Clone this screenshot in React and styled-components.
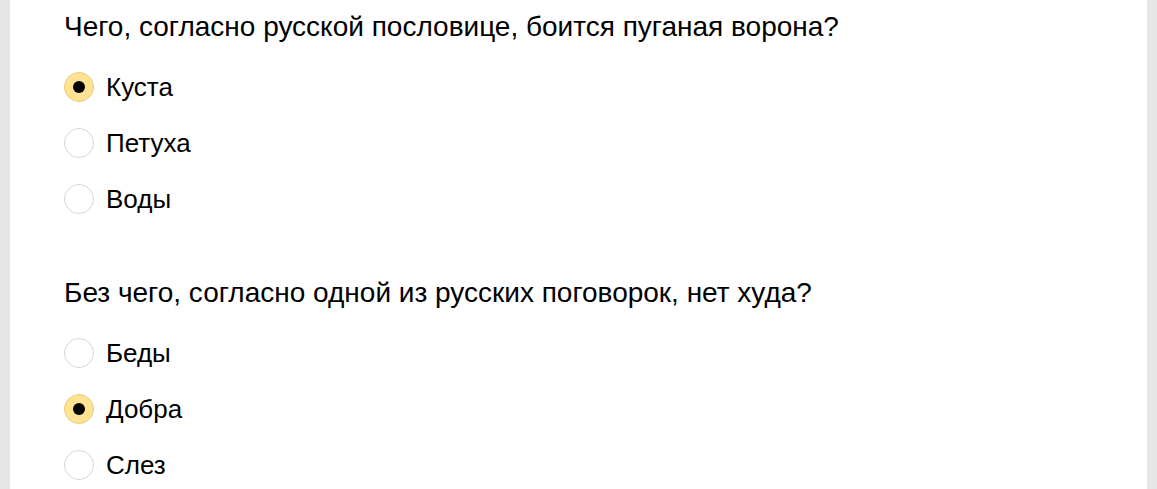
import React from "react";
import styled, { createGlobalStyle } from "styled-components";

const Global = createGlobalStyle`
  html, body { margin: 0; padding: 0; background: #e6e6e6; }
  body { font-family: "Liberation Sans", Arial, sans-serif; color: #000; }
`;

const Page = styled.div`
  display: flex;
  padding: 0 10px;
  height: 489px;
  overflow: hidden;
`;

const Card = styled.main`
  flex: 1;
  background: #fff;
  padding: 10px 54px 0;
  display: flex;
  flex-direction: column;
  gap: 62px;
`;

const Question = styled.section`
  display: flex;
  flex-direction: column;
`;

const Title = styled.h2`
  margin: 0 0 28px;
  font-size: 28px;
  font-weight: 400;
  line-height: 34px;
`;

const Options = styled.div`
  display: flex;
  flex-direction: column;
  gap: 26px;
`;

const Option = styled.label`
  display: flex;
  align-items: center;
  gap: 12px;
  font-size: 26px;
  line-height: 30px;
  cursor: pointer;
`;

const Radio = styled.span`
  box-sizing: border-box;
  width: 30px;
  height: 30px;
  border-radius: 50%;
  flex: none;
  display: flex;
  align-items: center;
  justify-content: center;
  border: 1px solid ${(p) => (p.$checked ? "#e8cd7c" : "#d6d6d6")};
  background: ${(p) => (p.$checked ? "#ffe393" : "#fff")};
  &::after {
    content: "";
    width: 12px;
    height: 12px;
    border-radius: 50%;
    background: #000;
    display: ${(p) => (p.$checked ? "block" : "none")};
  }
`;

const data = [
  {
    q: "Чего, согласно русской пословице, боится пуганая ворона?",
    options: ["Куста", "Петуха", "Воды"],
    checked: 0,
  },
  {
    q: "Без чего, согласно одной из русских поговорок, нет худа?",
    options: ["Беды", "Добра", "Слез"],
    checked: 1,
  },
];

export default function App() {
  return (
    <>
      <Global />
      <Page>
        <Card>
          {data.map((item, qi) => (
            <Question key={qi}>
              <Title>{item.q}</Title>
              <Options>
                {item.options.map((o, oi) => (
                  <Option key={oi}>
                    <Radio $checked={oi === item.checked} />
                    {o}
                  </Option>
                ))}
              </Options>
            </Question>
          ))}
        </Card>
      </Page>
    </>
  );
}
